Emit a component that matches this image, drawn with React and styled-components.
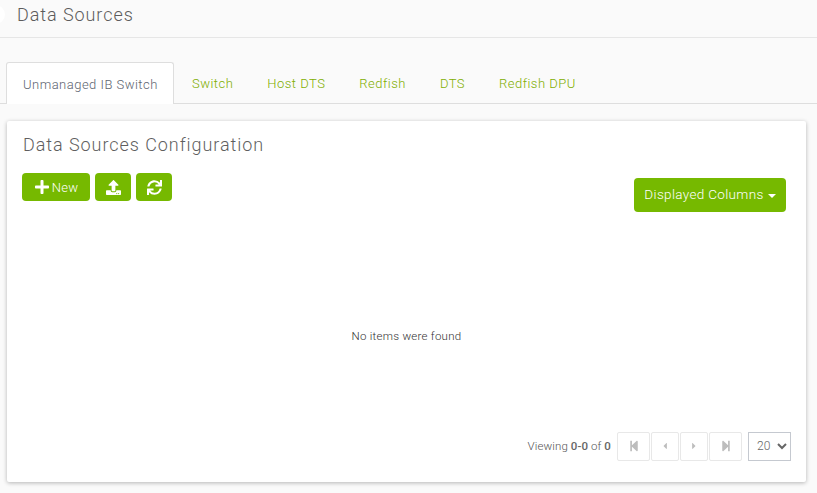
import React from "react";
import styled, { createGlobalStyle } from "styled-components";
import { FaPlus, FaUpload, FaSync, FaStepBackward, FaStepForward, FaCaretLeft, FaCaretRight } from "react-icons/fa";

const Global = createGlobalStyle`
  html, body { margin: 0; padding: 0; height: 100%; background: #fafafa; overflow: hidden; }
  body { font-family: Roboto, "Liberation Sans", sans-serif; }
  #root { height: 100%; }
`;
const Page = styled.div`
  width: 817px; height: 493px; position: relative; overflow: hidden; background: #fafafa;
`;
const Header = styled.header`
  height: 37px; border-bottom: 1px solid #e6e6e6; box-sizing: content-box;
  display: flex; align-items: center; padding-left: 17px;
`;
const HeaderDot = styled.span`
  position: absolute; left: -15px; top: 5px; width: 20px; height: 19px; border-radius: 50%; background: #fff;
`;
const Title = styled.h1`
  margin: 0; font-size: 18px; font-weight: 300; color: #5c5c5c; letter-spacing: 0.93px; line-height: 30px; position: relative; top: -4px;
`;
const Tabs = styled.nav`
  display: flex; margin-top: 24px; padding-left: 6px; height: 41px; border-bottom: 1px solid #dedede; box-sizing: content-box;
`;
const Tab = styled.a`
  box-sizing: border-box; height: ${p => (p.$active ? "42px" : "41px")};
  width: ${p => (p.$active ? "168px" : "auto")};
  padding: 2px 16px 0;
  margin-right: ${p => (p.$active ? "1px" : "0")};
  display: flex; align-items: center; font-size: 13px; font-weight: 300; letter-spacing: 0.48px;
  color: ${p => (p.$active ? "#5d6470" : "#7fae00")};
  background: ${p => (p.$active ? "#fff" : "transparent")};
  border: ${p => (p.$active ? "1px solid #dedede" : "1px solid transparent")};
  border-bottom: ${p => (p.$active ? "none" : "1px solid transparent")};
  border-radius: 3px 3px 0 0;
  white-space: nowrap;
`;
const Panel = styled.section`
  box-sizing: border-box; width: 799px; height: 361px; margin: 17px 0 0 7px;
  background: #fff; border-radius: 2px; box-shadow: 0 1px 4px rgba(0,0,0,.28);
  display: flex; flex-direction: column; padding: 0 15px 0 15px;
`;
const PanelTitle = styled.h2`
  margin: 11px 0 0 1px; font-size: 18px; font-weight: 300; line-height: 26px; color: #5f5f5f; letter-spacing: 0.94px;
`;
const Toolbar = styled.div`
  display: flex; justify-content: space-between; align-items: flex-start; margin-top: 15px;
`;
const ButtonGroup = styled.div`
  display: flex; gap: 5px;
`;
const GreenButton = styled.button`
  height: 28px; min-width: 36px; padding: 0 ${p => (p.$text ? "11px" : "0")};
  display: inline-flex; align-items: center; justify-content: center; gap: 2px;
  border: none; border-radius: 4px; background: #76b900; color: #fff;
  font: 300 13px Roboto, sans-serif; letter-spacing: .3px; white-space: nowrap;
`;
const NewButton = styled(GreenButton)`
  width: 68px; padding: 0;
`;
const ColumnsButton = styled(GreenButton)`
  height: 34px; width: 152px; margin: 5px 5px 0 0; padding: 0 0 2px; font-size: 13.5px; letter-spacing: .34px; gap: 4px;
`;
const Caret = styled.span`
  width: 0; height: 0; border-left: 4px solid transparent; border-right: 4px solid transparent; border-top: 4px solid #fff; margin-top: 4px;
`;
const Empty = styled.div`
  flex: 1; display: flex; align-items: center; justify-content: center;
  font-size: 11.5px; font-weight: 300; letter-spacing: .26px; color: #333; padding-top: 29px;
`;
const Footer = styled.div`
  display: flex; justify-content: flex-end; align-items: center; height: 30px; margin-bottom: 21px;
`;
const Viewing = styled.span`
  font-size: 11.5px; font-weight: 300; color: #555; margin-right: 6px; letter-spacing: .1px;
  b { font-weight: 500; color: #666; }
`;
const Pager = styled.div`
  display: flex; gap: 1px; margin-right: 6px;
`;
const PageBtn = styled.button`
  width: ${p => p.$w}px; height: 29px; padding: 0; background: #fff; border: 1px solid #e8e8e8; border-radius: 2px;
  display: flex; align-items: center; justify-content: center; color: #bdbdbd; font-size: ${p => p.$s}px;
`;
const PerPage = styled.select`
  width: 43px; height: 29px; box-sizing: border-box; background: #fff; border: 1px solid #c5c9d0; color: #666;
  font: 300 12px Roboto, sans-serif; padding: 0 0 0 4px; border-radius: 0;
`;

export default function App() {
  return (
    <Page>
      <Global />
      <HeaderDot />
      <Header><Title>Data Sources</Title></Header>
      <Tabs>
        <Tab $active>Unmanaged IB Switch</Tab>
        <Tab>Switch</Tab>
        <Tab>Host DTS</Tab>
        <Tab>Redfish</Tab>
        <Tab>DTS</Tab>
        <Tab>Redfish DPU</Tab>
      </Tabs>
      <Panel>
        <PanelTitle>Data Sources Configuration</PanelTitle>
        <Toolbar>
          <ButtonGroup>
            <NewButton $text><FaPlus size={16} />New</NewButton>
            <GreenButton aria-label="Upload"><FaUpload size={15} /></GreenButton>
            <GreenButton aria-label="Refresh"><FaSync size={15} /></GreenButton>
          </ButtonGroup>
          <ColumnsButton $text>Displayed Columns<Caret /></ColumnsButton>
        </Toolbar>
        <Empty>No items were found</Empty>
        <Footer>
          <Viewing>Viewing <b>0-0</b> of <b>0</b></Viewing>
          <Pager>
            <PageBtn $w={33} $s={12} aria-label="First"><FaStepBackward /></PageBtn>
            <PageBtn $w={28} $s={10} aria-label="Previous"><FaCaretLeft /></PageBtn>
            <PageBtn $w={28} $s={10} aria-label="Next"><FaCaretRight /></PageBtn>
            <PageBtn $w={33} $s={12} aria-label="Last"><FaStepForward /></PageBtn>
          </Pager>
          <PerPage defaultValue="20"><option>20</option><option>50</option></PerPage>
        </Footer>
      </Panel>
    </Page>
  );
}
